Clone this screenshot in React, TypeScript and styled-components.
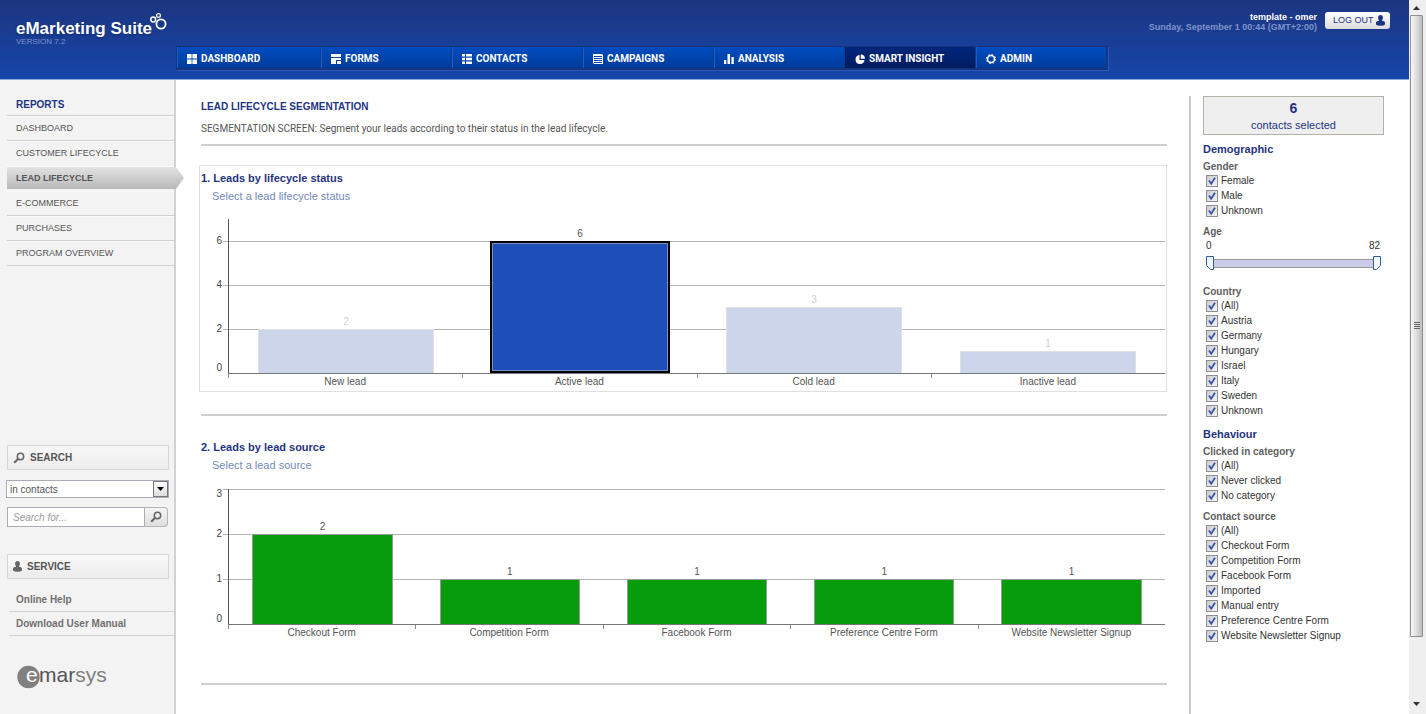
import React, { useState } from "react";
import styled, { createGlobalStyle, css } from "styled-components";

const navy = "#1f3480";
const sans = '"Liberation Sans", Arial, Helvetica, sans-serif';

const GlobalStyle = createGlobalStyle`
  * { box-sizing: border-box; }
  body { margin: 0; background: #fff; color: #555; font: 10px/15px ${sans}; }
  ul { list-style: none; margin: 0; padding: 0; }
  h1, h2, h3, p { margin: 0; }
  a { color: inherit; text-decoration: none; }
  button, input, select { font: inherit; color: inherit; margin: 0; }
  svg { display: block; }
`;

const Shell = styled.div`
  display: flex;
  min-height: 100vh;
`;

const Page = styled.div`
  flex: 1;
  min-width: 0;
  display: flex;
  flex-direction: column;
`;

/* ---------- header ---------- */

const Header = styled.header`
  display: flex;
  align-items: flex-start;
  height: 80px;
  padding-right: 19px;
  border-bottom: 1px solid #8fa9dc;
  background: linear-gradient(#1d357f, #1546ab);
`;

const Brand = styled.div`
  width: 176px;
  padding: 12px 0 0 16px;
`;

const BrandName = styled.div`
  display: flex;
  align-items: flex-start;
  font-size: 17px;
  line-height: 20px;
  font-weight: bold;
  color: #fff;
  white-space: nowrap;
  text-shadow: 0 1px 2px #102a6b;

  span { padding-top: 7px; }
  svg { margin-left: -2px; flex: none; }
`;

const Version = styled.div`
  font-size: 8px;
  line-height: 8px;
  margin-top: -1px;
  color: #7f93c8;
`;

const Nav = styled.nav`
  display: flex;
  margin-top: 46px;
  height: 24px;
  border: 1px solid #16337c;
  border-width: 1px 1px 2px;
  box-shadow: 1px 1px 0 #2a59b9;
`;

const NavItem = styled.a<{ $wide?: boolean; $active?: boolean }>`
  display: flex;
  align-items: center;
  gap: 3px;
  width: ${(p) => (p.$wide ? 144 : 131)}px;
  padding: 2px 0 0 9px;
  border-right: 1px solid #12398f;
  border-left: 1px solid ${(p) => (p.$active ? "#001a5c" : "#1c5cc6")};
  background: ${(p) =>
    p.$active ? "linear-gradient(#00267c, #001c5f)" : "linear-gradient(#004cc0, #003c9b)"};
  color: #fff;
  font: bold 10px/12px Roboto, ${sans};
  white-space: nowrap;
`;

const UserArea = styled.div`
  display: flex;
  gap: 8px;
  margin: 12px 0 0 auto;
`;

const UserInfo = styled.div`
  font-size: 9px;
  line-height: 10px;
  font-weight: bold;
  text-align: right;
  white-space: nowrap;
  color: #7f93c8;

  strong { display: block; color: #fff; }
`;

const LogoutButton = styled.button`
  display: flex;
  align-items: center;
  justify-content: space-between;
  width: 65px;
  height: 17px;
  padding: 0 5px 0 8px;
  border: 0;
  border-radius: 3px;
  background: linear-gradient(#fff, #dcdcdc);
  font-size: 9px;
  color: ${navy};
  white-space: nowrap;
`;

/* ---------- sidebar ---------- */

const Body = styled.div`
  flex: 1;
  display: flex;
`;

const Sidebar = styled.aside`
  width: 176px;
  flex: none;
  border-right: 2px solid #d2d2d2;
  background: #f3f3f3;
`;

const MenuTitle = styled.h2`
  margin-left: 7px;
  padding: 17px 0 2px 9px;
  border-bottom: 1px solid #d0d0d0;
  font-size: 10px;
  line-height: 16px;
  color: ${navy};
`;

const MenuItem = styled.li<{ $plain?: boolean }>`
  display: flex;
  height: 25px;
  margin-left: 7px;
  box-shadow: inset 0 1px 0 #fafafa;
  border-bottom: 1px solid ${(p) => (p.$plain ? "transparent" : "#d0d0d0")};
`;

const MenuLink = styled.a<{ $active?: boolean }>`
  flex: 1;
  padding-left: 9px;
  font-size: 9px;
  line-height: 24px;
  ${(p) =>
    p.$active &&
    css`
      flex: none;
      width: 177px;
      margin: 1px 0;
      line-height: 22px;
      font-weight: bold;
      background: linear-gradient(#e2e2e2, #b9b9b9);
      clip-path: polygon(0 0, 169px 0, 100% 50%, 169px 100%, 0 100%);
    `}
`;

const SideBox = styled.h2<{ $gap: number }>`
  display: flex;
  align-items: center;
  gap: 5px;
  height: 25px;
  margin: ${(p) => p.$gap}px 5px 0 7px;
  padding-left: 5px;
  border: 1px solid #d6d6d6;
  background: linear-gradient(#f8f8f8, #ececec);
  font-size: 10px;
`;

const SelectWrap = styled.div`
  display: grid;
  margin: 10px 5px 0 6px;

  > * { grid-area: 1 / 1; }
  > span {
    justify-self: end;
    align-self: center;
    display: grid;
    place-items: center;
    width: 15px;
    height: 16px;
    margin-right: 1px;
    border: 1px solid #777;
    background: linear-gradient(#fff, #ddd);
    pointer-events: none;
  }
`;

const Select = styled.select`
  appearance: none;
  height: 18px;
  padding: 0 18px 0 3px;
  border: 1px solid #a9adb5;
  border-radius: 0;
  background: #fff;
`;

const SearchForm = styled.form`
  display: flex;
  height: 20px;
  margin: 9px 6px 0 7px;
`;

const SearchInput = styled.input`
  flex: 1;
  min-width: 0;
  padding: 0 5px;
  border: 1px solid #a9adb5;
  background: #fff;

  &::placeholder { color: #999; font-style: italic; opacity: 1; }
`;

const SearchButton = styled.button`
  display: grid;
  place-items: center;
  width: 23px;
  padding: 0;
  border: 1px solid #b5b5b5;
  border-left: 0;
  border-radius: 0 4px 4px 0;
  background: linear-gradient(#f5f5f5, #dedede);
`;

const ServiceList = styled.ul`
  margin: 9px 0 0 9px;
  font-weight: bold;
  color: #707070;

  a {
    display: block;
    height: 24px;
    padding-left: 7px;
    border-bottom: 1px solid #d0d0d0;
    line-height: 23px;
  }
`;

const Logo = styled.div`
  margin: 25px 0 0 17px;
`;

/* ---------- report ---------- */

const Main = styled.main`
  flex: 1;
  min-width: 0;
  padding: 20px 22px 0 25px;
`;

const PageTitle = styled.h1`
  font-size: 10px;
  line-height: 14px;
  color: ${navy};
`;

const Description = styled.p`
  margin-top: 8px;
  font: 10px/14px Roboto, ${sans};
`;

const Rule = styled.hr<{ $gap: number }>`
  height: 2px;
  margin: ${(p) => p.$gap}px 0 0;
  border: 0;
  background: #cfcfcf;
`;

const Panel = styled.section<{ $framed?: boolean }>`
  margin: ${(p) => (p.$framed ? 19 : 18)}px 0 0 -2px;
  padding: 5px 1px 3px 0;
  border: 1px solid ${(p) => (p.$framed ? "#e0e0e0" : "transparent")};
`;

const PanelTitle = styled.h2`
  padding-left: 1px;
  font-size: 11px;
  line-height: 14px;
  color: ${navy};
`;

const PanelHint = styled.p`
  padding: 3px 0 0 12px;
  font-size: 11px;
  line-height: 16px;
  color: #7388bb;
`;

const ChartBox = styled.div<{ $gap: number }>`
  display: grid;
  grid-template-columns: 23px 1fr;
  margin-top: ${(p) => p.$gap}px;
`;

const Axis = styled.div`
  padding-right: 1px;
  text-align: right;
  line-height: 10px;
  color: #444;
`;

const AxisLabel = styled.div<{ $space: number }>`
  height: ${(p) => p.$space}px;
`;

const Plot = styled.div<{ $height: number }>`
  display: grid;
  height: ${(p) => p.$height}px;

  > * { grid-area: 1 / 1; }
`;

const Lines = styled.div`
  display: flex;
  flex-direction: column;
  justify-content: flex-end;
`;

const Line = styled.div<{ $step: number }>`
  height: ${(p) => p.$step}px;
  border-top: 1px solid #b4b4b4;
`;

const Bars = styled.div`
  display: flex;
  align-items: flex-end;
  margin-left: 5px;
  border-left: 1px solid #555;
`;

const BarCell = styled.div<{ $muted?: boolean }>`
  flex: 1;
  display: flex;
  flex-direction: column;
  align-items: center;
  line-height: 14px;
  color: ${(p) => (p.$muted ? "#d0d0d0" : "#555")};
`;

const Bar = styled.button<{ $height: number; $tone: "green" | "muted" | "selected" }>`
  width: 75%;
  height: ${(p) => p.$height}px;
  padding: 0;
  ${(p) =>
    p.$tone === "green" &&
    css`
      border: 1px solid #999;
      border-bottom: 0;
      background: #069c0c;
    `}
  ${(p) =>
    p.$tone === "muted" &&
    css`
      border: 1px solid #dfe0e4;
      border-bottom: 0;
      background: #cdd5ea;
    `}
  ${(p) =>
    p.$tone === "selected" &&
    css`
      width: calc(75% + 4px);
      border: 2px solid #000;
      background: #1e4fb9;
      box-shadow: inset 0 0 0 1px #7c90bd;
    `}
`;

const Categories = styled.div`
  grid-column: 2;
  display: flex;
  margin-left: 5px;
  border-top: 1px solid #777;
`;

const Category = styled.div`
  flex: 1;
  padding-top: 1px;
  text-align: center;
  line-height: 13px;
  background: linear-gradient(#888, #888) no-repeat 0 0 / 1px 4px;
`;

/* ---------- filters ---------- */

const Filters = styled.aside`
  width: 220px;
  flex: none;
  margin-top: 16px;
  padding: 0 25px 0 12px;
  border-left: 2px solid #cbcbcb;
  color: #333;
`;

const Counter = styled.div`
  height: 39px;
  padding-top: 2px;
  border: 1px solid #b2b2a6;
  background: #efefef;
  text-align: center;
  font-size: 11px;
  line-height: 16px;
  color: ${navy};

  strong { display: block; font-size: 14px; line-height: 18px; }
`;

const FilterHeading = styled.h2<{ $gap: number }>`
  margin-top: ${(p) => p.$gap}px;
  font-size: 11px;
  line-height: 14px;
  color: ${navy};
`;

const Group = styled.fieldset<{ $gap: number }>`
  min-width: 0;
  margin: ${(p) => p.$gap}px 0 0;
  padding: 0;
  border: 0;
`;

const GroupTitle = styled.legend`
  padding: 0;
  font-weight: bold;
  line-height: 12px;
  color: #606060;
`;

const CheckRow = styled.label`
  display: flex;
  align-items: center;
  gap: 3px;
  height: 15px;
  margin-left: 3px;
`;

const CheckMark = styled.span`
  display: grid;
  width: 12px;
  height: 12px;

  > * { grid-area: 1 / 1; }
  input {
    appearance: none;
    width: 12px;
    height: 12px;
    border: 1px solid #8d8f92;
    background: linear-gradient(135deg, #c9cbd0, #f4f4f4);
  }
  svg { pointer-events: none; }
  input:not(:checked) + svg { visibility: hidden; }
`;

const RangeValues = styled.div`
  display: flex;
  justify-content: space-between;
  padding: 1px 4px 0 3px;
  line-height: 13px;
`;

const thumb = (path: string) =>
  `url("data:image/svg+xml,%3Csvg xmlns='http://www.w3.org/2000/svg' width='9' height='14'%3E%3Cpath d='${path}' fill='%23f4f7fb' stroke='%23315f96'/%3E%3C/svg%3E")`;

const RangeTrack = styled.div`
  display: grid;
  align-items: center;
  height: 14px;
  margin: 4px 3px 0;
  background: linear-gradient(#999, #999) 8px 3px / calc(100% - 16px) 1px no-repeat,
    linear-gradient(#999, #999) 8px 11px / calc(100% - 16px) 1px no-repeat,
    linear-gradient(#cccce8, #cccce8) 8px 3px / calc(100% - 16px) 9px no-repeat;
`;

const Range = styled.input<{ $end?: boolean }>`
  grid-area: 1 / 1;
  appearance: none;
  width: 100%;
  height: 14px;
  background: transparent;
  pointer-events: none;

  &::-webkit-slider-thumb {
    appearance: none;
    width: 9px;
    height: 14px;
    pointer-events: auto;
    background: ${(p) =>
      p.$end ? thumb("M1.5.5h7v9l-4 4h-3z") : thumb("M.5.5h7v13h-3l-4-4z")} no-repeat;
  }
`;

/* ---------- window scroll bar ---------- */

const ScrollBar = styled.div`
  width: 17px;
  flex: none;
  display: flex;
  flex-direction: column;
  align-items: flex-start;
  padding-bottom: 3px;
  background: #efefef;
`;

const ScrollArrow = styled.div`
  display: grid;
  place-items: center;
  width: 15px;
  height: 15px;
`;

const ScrollThumb = styled.div`
  display: grid;
  place-items: center;
  width: 13px;
  height: 622px;
  margin: 0 0 auto 1px;
  border: 1px solid #8f8f8f;
  border-radius: 1px;
  background: linear-gradient(90deg, #f6f6f6, #dedede 50%, #bdbdc2);
`;

/* ---------- icons ---------- */

const icons: Record<string, React.ReactNode> = {
  dashboard: <path d="M0 0h4.600v4.500H0zM5.400 0H10v4.500H5.400zM0 5.500h4.600V10H0zM5.400 5.500H10V10H5.400z" />,
  forms: <path d="M0 0h10v3H0zM0 4h10v2H5v4H0zM6 7h4v3H6z" />,
  contacts: <path d="M0 0h3v2.400H0zM4 0h6v2.400H4zM0 3.800h3v2.400H0zM4 3.800h6v2.400H4zM0 7.600h3V10H0zM4 7.600h6V10H4z" />,
  campaigns: (
    <path
      fillRule="evenodd"
      d="M0 0h9l1 1v9H1L0 9zM1 2v1h8V2zM1 4v1h8V4zM1 6v1h8V6zM1 8v1h8V8z"
    />
  ),
  analysis: <path d="M0 6h2.300v4H0zM3.500 0h2.500v10H3.500zM7.400 3h2.400v7H7.400z" />,
  insight: <path d="M4.500 1A4.500 4.500 0 1 0 9.500 6H4.500zM5.700.2v4.600H10A4.500 4.500 0 0 0 5.700.2z" />,
  admin: (
    <g fill="none" stroke="currentColor">
      <circle cx="5" cy="5" r="3.500" strokeWidth="1.600" />
      <circle cx="5" cy="5" r="4.600" strokeWidth="1" strokeDasharray="1.600 2.013" />
    </g>
  ),
};

const NavIcon = ({ name }: { name: string }) => (
  <svg width="11" height="10" viewBox="0 0 11 10" fill="currentColor" overflow="visible" aria-hidden="true">
    {icons[name]}
  </svg>
);

const Magnifier = () => (
  <svg width="12" height="12" viewBox="0 0 12 12" fill="none" stroke="#666" aria-hidden="true">
    <circle cx="7.500" cy="4.500" r="3.200" strokeWidth="1.500" />
    <path d="M5 7L1.200 10.800" strokeWidth="2" />
  </svg>
);

const Person = ({ color }: { color: string }) => (
  <svg width="9" height="11" viewBox="0 0 9 11" fill={color} aria-hidden="true">
    <ellipse cx="4.500" cy="2.800" rx="2.400" ry="2.700" />
    <path d="M3 4.500h3v1.200l1.500.3Q9 6.400 9 7.800v1.700Q8 10.800 4.500 10.800T0 9.500V7.800q0-1.400 1.500-1.800l1.500-.3z" />
  </svg>
);

const Bubbles = () => (
  <svg width="18" height="20" viewBox="0 0 18 20" fill="none" stroke="#fff" aria-hidden="true">
    <circle cx="11" cy="12" r="4.600" strokeWidth="1.800" />
    <circle cx="3.200" cy="7.500" r="2.400" strokeWidth="1.500" />
    <circle cx="8.500" cy="3.500" r="1.900" strokeWidth="1.200" />
  </svg>
);

/* ---------- data ---------- */

const nav = [
  ["dashboard", "DASHBOARD"],
  ["forms", "FORMS"],
  ["contacts", "CONTACTS"],
  ["campaigns", "CAMPAIGNS"],
  ["analysis", "ANALYSIS"],
  ["insight", "SMART INSIGHT"],
  ["admin", "ADMIN"],
];

const reports = ["DASHBOARD", "CUSTOMER LIFECYCLE", "LEAD LIFECYCLE", "E-COMMERCE", "PURCHASES", "PROGRAM OVERVIEW"];

type Datum = { label: string; value: number };

const statuses: Datum[] = [
  { label: "New lead", value: 2 },
  { label: "Active lead", value: 6 },
  { label: "Cold lead", value: 3 },
  { label: "Inactive lead", value: 1 },
];

const sources: Datum[] = [
  { label: "Checkout Form", value: 2 },
  { label: "Competition Form", value: 1 },
  { label: "Facebook Form", value: 1 },
  { label: "Preference Centre Form", value: 1 },
  { label: "Website Newsletter Signup", value: 1 },
];

/* ---------- composed parts ---------- */

type ChartProps = {
  data: Datum[];
  unit: number;
  height: number;
  ticks: number[];
  gap: number;
  selected?: string;
};

const Chart = ({ data, unit, height, ticks, gap, selected }: ChartProps) => {
  const step = (ticks[0] - ticks[1]) * unit;
  const head = height - ticks[0] * unit;
  return (
    <ChartBox $gap={gap}>
      <Axis>
        {head > 0 && <AxisLabel $space={head - 5} />}
        {ticks.map((t, i) => {
          const nearTop = i === 0 && head === 0;
          const nearZero = i === ticks.length - 2;
          return (
            <AxisLabel key={t} $space={t === 0 ? 10 : nearTop || nearZero ? step - 5 : step}>
              {t}
            </AxisLabel>
          );
        })}
      </Axis>
      <Plot $height={height}>
        <Lines>
          {ticks.slice(0, -1).map((t) => (
            <Line key={t} $step={step} />
          ))}
        </Lines>
        <Bars>
          {data.map((d) => {
            const tone = !selected ? "green" : d.label === selected ? "selected" : "muted";
            return (
              <BarCell key={d.label} $muted={tone === "muted"}>
                {d.value}
                <Bar aria-label={d.label} $height={d.value * unit} $tone={tone} />
              </BarCell>
            );
          })}
        </Bars>
      </Plot>
      <Categories>
        {data.map((d) => (
          <Category key={d.label}>{d.label}</Category>
        ))}
      </Categories>
    </ChartBox>
  );
};

const CheckGroup = ({ title, options, gap }: { title: string; options: string[]; gap: number }) => (
  <Group $gap={gap}>
    <GroupTitle>{title}</GroupTitle>
    {options.map((o) => (
      <CheckRow key={o}>
        <CheckMark>
          <input type="checkbox" defaultChecked />
          <svg width="12" height="12" viewBox="0 0 12 12" fill="none" stroke="#3450a0" strokeWidth="1.700">
            <path d="M3 5.500L5.200 8.700L9 2.800" />
          </svg>
        </CheckMark>
        {o}
      </CheckRow>
    ))}
  </Group>
);

const AgeRange = () => {
  const [low, setLow] = useState(0);
  const [high, setHigh] = useState(82);
  return (
    <Group $gap={8}>
      <GroupTitle>Age</GroupTitle>
      <RangeValues>
        <span>{low}</span>
        <span>{high}</span>
      </RangeValues>
      <RangeTrack>
        <Range type="range" aria-label="Minimum age" max={82} value={low} onChange={(e) => setLow(+e.target.value)} />
        <Range
          $end
          type="range"
          aria-label="Maximum age"
          max={82}
          value={high}
          onChange={(e) => setHigh(+e.target.value)}
        />
      </RangeTrack>
    </Group>
  );
};

export default function App() {
  return (
    <Shell>
      <GlobalStyle />
      <Page>
        <Header>
          <Brand>
            <BrandName>
              <span>eMarketing Suite</span>
              <Bubbles />
            </BrandName>
            <Version>VERSION 7.2</Version>
          </Brand>
          <Nav>
            {nav.map(([icon, label], i) => (
              <NavItem key={icon} href="#" $wide={i === 0} $active={icon === "insight"}>
                <NavIcon name={icon} />
                {label}
              </NavItem>
            ))}
          </Nav>
          <UserArea>
            <UserInfo>
              <strong>template - omer</strong>
              Sunday, September 1 00:44 (GMT+2:00)
            </UserInfo>
            <LogoutButton>
              LOG OUT
              <Person color={navy} />
            </LogoutButton>
          </UserArea>
        </Header>

        <Body>
          <Sidebar>
            <MenuTitle>REPORTS</MenuTitle>
            <ul>
              {reports.map((r, i) => (
                <MenuItem key={r} $plain={i === 1 || i === 2}>
                  <MenuLink href="#" $active={i === 2}>
                    {r}
                  </MenuLink>
                </MenuItem>
              ))}
            </ul>

            <SideBox $gap={179}>
              <Magnifier />
              SEARCH
            </SideBox>
            <SelectWrap>
              <Select aria-label="Search scope">
                <option>in contacts</option>
              </Select>
              <span>
                <svg width="7" height="4" viewBox="0 0 7 4">
                  <path d="M0 0h7L3.500 4z" />
                </svg>
              </span>
            </SelectWrap>
            <SearchForm onSubmit={(e) => e.preventDefault()}>
              <SearchInput aria-label="Search for" placeholder="Search for..." />
              <SearchButton aria-label="Search">
                <Magnifier />
              </SearchButton>
            </SearchForm>

            <SideBox $gap={27}>
              <Person color="#666" />
              SERVICE
            </SideBox>
            <ServiceList>
              <li>
                <a href="#">Online Help</a>
              </li>
              <li>
                <a href="#">Download User Manual</a>
              </li>
            </ServiceList>
            <Logo>
              <svg
                width="94"
                height="32"
                viewBox="0 0 94 32"
                fontFamily="Liberation Sans, sans-serif"
                role="img"
                aria-label="emarsys"
              >
                <circle cx="11.500" cy="16" r="11.200" fill="#808080" />
                <text x="9" y="21" fontSize="21" fill="#fff">
                  e
                </text>
                <text x="22" y="21" fontSize="21" fill="#555">
                  mar
                  <tspan fill="#808080">sys</tspan>
                </text>
              </svg>
            </Logo>
          </Sidebar>

          <Main>
            <PageTitle>LEAD LIFECYCLE SEGMENTATION</PageTitle>
            <Description>
              SEGMENTATION SCREEN: Segment your leads according to their status in the lead lifecycle.
            </Description>
            <Rule $gap={8} />
            <Panel $framed>
              <PanelTitle>1. Leads by lifecycle status</PanelTitle>
              <PanelHint>Select a lead lifecycle status</PanelHint>
              <Chart data={statuses} unit={22} height={154} ticks={[6, 4, 2, 0]} gap={15} selected="Active lead" />
            </Panel>
            <Rule $gap={22} />
            <Panel>
              <PanelTitle>2. Leads by lead source</PanelTitle>
              <PanelHint>Select a lead source</PanelHint>
              <Chart data={sources} unit={45} height={135} ticks={[3, 2, 1, 0]} gap={16} />
            </Panel>
            <Rule $gap={40} />
          </Main>

          <Filters>
            <Counter>
              <strong>6</strong>
              contacts selected
            </Counter>
            <FilterHeading $gap={7}>Demographic</FilterHeading>
            <CheckGroup gap={5} title="Gender" options={["Female", "Male", "Unknown"]} />
            <AgeRange />
            <CheckGroup
              gap={16}
              title="Country"
              options={["(All)", "Austria", "Germany", "Hungary", "Israel", "Italy", "Sweden", "Unknown"]}
            />
            <FilterHeading $gap={9}>Behaviour</FilterHeading>
            <CheckGroup gap={5} title="Clicked in category" options={["(All)", "Never clicked", "No category"]} />
            <CheckGroup
              gap={8}
              title="Contact source"
              options={[
                "(All)",
                "Checkout Form",
                "Competition Form",
                "Facebook Form",
                "Imported",
                "Manual entry",
                "Preference Centre Form",
                "Website Newsletter Signup",
              ]}
            />
          </Filters>
        </Body>
      </Page>

      <ScrollBar aria-hidden="true">
        <ScrollArrow>
          <svg width="7" height="4" viewBox="0 0 7 4" fill="#333">
            <path d="M0 4h7L3.500 0z" />
          </svg>
        </ScrollArrow>
        <ScrollThumb>
          <svg width="6" height="8" viewBox="0 0 6 8" fill="#666">
            <path d="M0 0h6v1H0zM0 2h6v1H0zM0 4h6v1H0zM0 6h6v1H0z" />
          </svg>
        </ScrollThumb>
        <ScrollArrow>
          <svg width="7" height="4" viewBox="0 0 7 4" fill="#333">
            <path d="M0 0h7L3.500 4z" />
          </svg>
        </ScrollArrow>
      </ScrollBar>
    </Shell>
  );
}
